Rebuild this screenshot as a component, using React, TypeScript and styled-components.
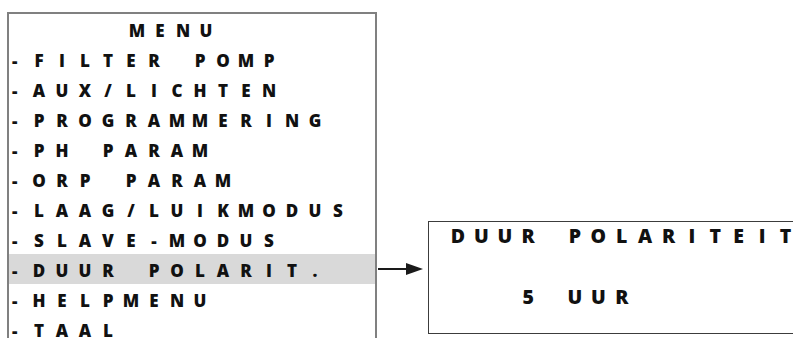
import React from "react";
import styled, { createGlobalStyle } from "styled-components";

const Global = createGlobalStyle`
  html, body { margin: 0; padding: 0; background: #ffffff; }
  body { font-family: "Open Sans", "Liberation Sans", sans-serif; color: #111111; }
`;

const Page = styled.div`
  display: flex;
  align-items: flex-start;
  width: 793px;
  height: 338px;
  overflow: hidden;
  background: #ffffff;
`;

const MenuPanel = styled.div`
  flex: none;
  margin: 12px 0 0 7px;
  width: 370px;
  height: 360px;
  box-sizing: border-box;
  border: 2px solid #808080;
  border-bottom: none;
  display: flex;
  flex-direction: column;
`;

const MenuRow = styled.div<{ $active?: boolean }>`
  display: flex;
  align-items: flex-start;
  height: 30px;
  box-sizing: border-box;
  padding: 4px 0 0 3px;
  background: ${(p) => (p.$active ? "#d9d9d9" : "transparent")};
  font-size: 17px;
  font-weight: 800;
  line-height: 26px;
  white-space: pre;
`;

const Dash = styled.span`
  flex: none;
  width: 15.5px;
`;

const Label = styled.span<{ $indent?: number }>`
  display: flex;
  padding-left: ${(p) => p.$indent ?? 0}px;
`;

const Cell = styled.span<{ $w: number }>`
  flex: none;
  display: inline-block;
  width: ${(p) => p.$w}px;
  text-align: center;
`;

const Connector = styled.svg`
  flex: none;
  margin: 262px 0 0 1px;
  display: block;
`;

const DetailPanel = styled.div`
  flex: none;
  margin: 221px 0 0 5px;
  width: 400px;
  height: 113px;
  box-sizing: border-box;
  border: 1px solid #3c3c3c;
  padding-left: 17.3px;
  font-size: 19.5px;
  font-weight: 800;
  line-height: 27px;
  white-space: pre;
`;

const DetailLine = styled.div<{ $gap?: number }>`
  margin-top: ${(p) => p.$gap ?? 0}px;
`;

function Spaced({ text, pitch, indent }: { text: string; pitch: number; indent?: number }) {
  return (
    <Label $indent={indent}>
      {Array.from(text).map((ch, i) => (
        <Cell key={i} $w={pitch}>
          {ch === " " ? "\u00a0" : ch}
        </Cell>
      ))}
    </Label>
  );
}

const items = [
  "FILTER POMP",
  "AUX/LICHTEN",
  "PROGRAMMERING",
  "PH PARAM",
  "ORP PARAM",
  "LAAG/LUIKMODUS",
  "SLAVE-MODUS",
  "DUUR POLARIT.",
  "HELPMENU",
  "TAAL",
];

export default function App() {
  return (
    <>
      <Global />
      <Page>
        <MenuPanel>
          <MenuRow>
            <Dash />
            <Spaced text="MENU" pitch={23} indent={98} />
          </MenuRow>
          {items.map((it) => (
            <MenuRow key={it} $active={it === "DUUR POLARIT."}>
              <Dash>-</Dash>
              <Spaced text={it} pitch={23} />
            </MenuRow>
          ))}
        </MenuPanel>
        <Connector width="45" height="14" viewBox="0 0 45 14">
          <line x1="0" y1="7" x2="30" y2="7" stroke="#1a1a1a" strokeWidth="2" />
          <polygon points="28,1 45,7 28,13" fill="#1a1a1a" />
        </Connector>
        <DetailPanel>
          <DetailLine>
            <Spaced text="DUUR POLARITEIT" pitch={23.4} />
          </DetailLine>
          <DetailLine $gap={34}>
            <Spaced text="5 UUR" pitch={23.4} indent={70.2} />
          </DetailLine>
        </DetailPanel>
      </Page>
    </>
  );
}
